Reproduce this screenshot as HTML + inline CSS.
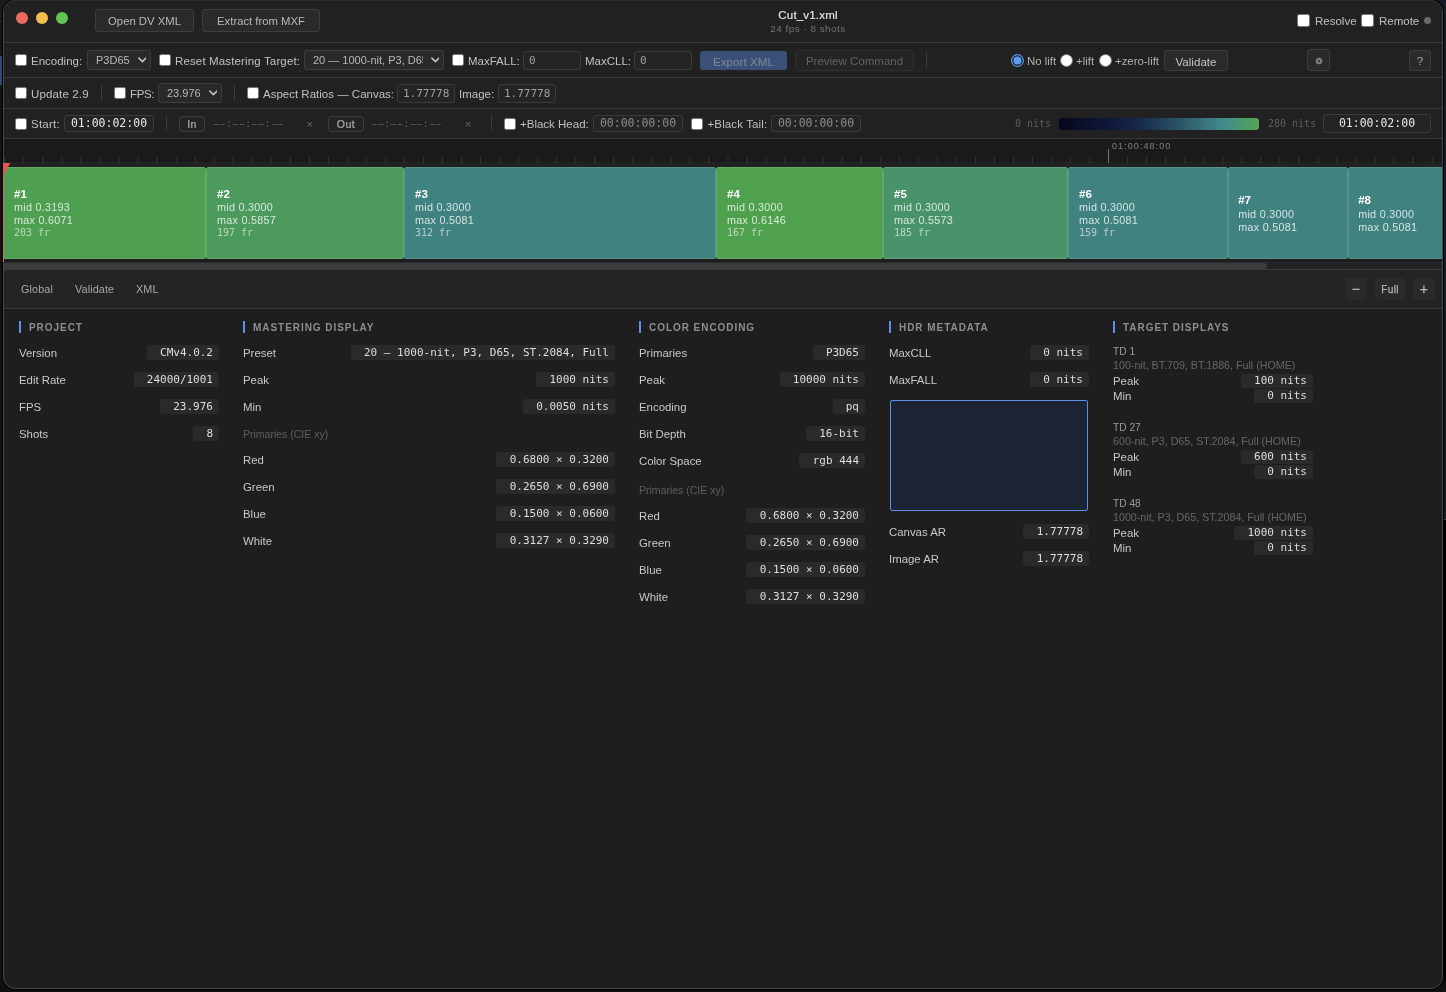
<!DOCTYPE html>
<html lang="en">
<head>
<meta charset="utf-8">
<title>Cut_v1.xml</title>
<style>
*{box-sizing:border-box;margin:0;padding:0}
html,body{width:1446px;height:992px;overflow:hidden;background:#141414}
body{position:relative;font-family:"Liberation Sans",Arial,sans-serif;color:#d0d0d0;font-size:11px}
.mono{font-family:"DejaVu Sans Mono","Liberation Mono",monospace}
.abs{position:absolute}
/* backdrop behind the window */
#bg-right{position:absolute;left:1436px;top:0;width:10px;height:992px;background:linear-gradient(#161a24 0,#161a24 519px,#3a3f4a 519px,#3a3f4a 520px,#000 520px)}
#bg-bottom{position:absolute;left:0;top:980px;width:1446px;height:12px;background:#101010}
#bg-left{position:absolute;left:0;top:0;width:10px;height:992px;background:linear-gradient(#1b1b1b 0,#1b1b1b 21px,#2c2c2c 21px,#2c2c2c 22px,#141414 22px,#141414 51px,#2a2a2a 51px,#2a2a2a 52px,#141414 52px,#141414 56px,#2c4d6e 56px,#2c4d6e 85px,#121212 85px)}
/* window */
#ph{position:absolute;left:0;top:0;will-change:transform}
#win{will-change:transform;position:absolute;left:3px;top:0;width:1440px;height:989px;background:#1e1e1e;border:1px solid #464646;border-radius:12px;overflow:hidden;box-shadow:0 0 0 1px #000}
#win>*{position:absolute}
.hline{left:0;width:1440px;height:1px;background:#3a3a3a}
.bar{left:0;width:1440px;background:#212121}
.btn{border:1px solid #3d3d3d;border-radius:3px;background:#2a2a2a;color:#c4c4c4;text-align:center;white-space:nowrap}
.lbl{white-space:nowrap;color:#c0c0c0;font-size:11.5px;line-height:14px}
.cb{width:12px;height:12px;background:#fff;border:1px solid #767676;border-radius:2.2px}
.rb{width:13px;height:13px;background:#fff;border:1px solid #767676;border-radius:50%}
.inp{border:1px solid #3b3b3b;border-radius:3px;background:#242424;color:#9a9a9a;white-space:nowrap}
.sel{border:1px solid #3d3d3d;border-radius:3px;background:#292929;color:#b8b8b8;white-space:nowrap;overflow:hidden}
.vsep{width:1px;background:#3d3d3d}
#c{position:absolute;left:-4px;top:-1px;width:1446px;height:992px}
#c .hline{left:4px;position:absolute}
#c .bar{left:4px;position:absolute}
.tl{width:12px;height:12px;border-radius:50%}
.tb{font-size:11.3px;line-height:21px;padding-top:1px;color:#b8b8b8}
#title{left:708px;width:200px;top:8px;text-align:center;font-size:11.5px;color:#e6e6e6;line-height:14px;letter-spacing:.18px;-webkit-text-stroke:.18px #e0e0e0}
#subtitle{left:708px;width:200px;top:23px;text-align:center;font-size:9.9px;letter-spacing:.5px;color:#747474;line-height:12px}
.st{position:absolute;top:0;line-height:18px;font-size:11px;white-space:nowrap;display:block}
.chev{position:absolute;right:3.6px;top:6.3px;width:8.8px;height:5.9px}
.ti{font-size:11px;line-height:17px;padding-left:5px;color:#a0a0a0}
.tc{font-size:11.5px;line-height:15px;text-align:center;color:#8a8a8a}
.rb.on{background:#5b9cf5;border:1.5px solid #5b9cf5;box-shadow:inset 0 0 0 1.5px #262626}
.lbl.sm{font-size:11.4px;margin-top:-.5px;color:#b2b2b2}
.io{font-size:10.5px;font-weight:normal;letter-spacing:.45px;-webkit-text-stroke:.22px #adadad;line-height:15px;color:#adadad;background:#242424}
.hy{display:inline-block;transform:scaleX(1.8)}
.dash{font-size:10.6px;line-height:14px;color:#5c5c5c}
.xx{font-size:11px;line-height:14px;color:#6a6a6a}
.nits{font-size:10px;line-height:14px;color:#5e5e5e}
#rlabel{left:1112px;top:141px;font-size:9px;line-height:11px;color:#808080;letter-spacing:1.08px;white-space:nowrap}
.clip{top:167px;height:92px;border-radius:2.5px;border:1px solid rgba(255,255,255,.13);display:flex;align-items:center;overflow:hidden}
.ci{padding-left:10px;white-space:nowrap}
.c3 .cm{position:relative;top:1.4px}
.ci.c3{padding-left:9.2px}
.cn{font-weight:bold;font-size:11.5px;line-height:13px;color:#fff}
.cm{font-size:10.8px;letter-spacing:.27px;line-height:12.8px;color:rgba(255,255,255,.78)}
.cf{font-size:10px;line-height:11px;color:rgba(255,255,255,.6)}
.tab{top:283px;font-size:10.8px;letter-spacing:.12px;line-height:13px;color:#a8a8a8}
.zb{top:278px;height:21.5px;border-radius:4px;background:#2a2a2a;color:#b4b4b4;text-align:center;line-height:23.4px;font-size:14px;-webkit-text-stroke:.25px #b4b4b4}
.sbar{top:321px;width:2px;height:12px;background:#5b8fe8}
.stitle{top:322px;font-size:10px;line-height:12px;font-weight:bold;letter-spacing:.95px;color:#8e8e8e;white-space:nowrap}
.rl{font-size:11.4px;line-height:14px;color:#c8c8c8;white-space:nowrap}
.pill{height:14.5px;border-radius:3px;background:#2a2a2a;color:#dedede;font-size:11px;line-height:14px;padding:1px 6px 0 13.2px;white-space:pre}
.subh{font-size:10.5px;line-height:13px;color:#5e5e5e;white-space:nowrap}
.tdn{font-size:10.2px;line-height:12px;color:#9a9a9a;white-space:nowrap}
.tdd{font-size:10.7px;line-height:12px;color:#666;white-space:nowrap}
</style>
</head>
<body>
<div id="bg-left"></div><div id="bg-right"></div><div id="bg-bottom"></div>
<div id="win">
<div id="c">
<!-- title bar -->
<div class="bar" style="top:0;height:42px"></div>
<div class="abs tl" style="left:16px;top:12px;background:#ec6a5e"></div>
<div class="abs tl" style="left:36px;top:12px;background:#f4bf4f"></div>
<div class="abs tl" style="left:56px;top:12px;background:#61c554"></div>
<div class="abs btn tb" style="left:95px;top:9px;width:99px;height:23px">Open DV XML</div>
<div class="abs btn tb" style="left:202px;top:9px;width:118px;height:23px">Extract from MXF</div>
<div class="abs" id="title">Cut_v1.xml</div>
<div class="abs" id="subtitle">24 fps · 8 shots</div>
<div class="abs cb" style="left:1297px;top:14px;width:13px;height:13px"></div>
<div class="abs lbl" style="left:1315px;top:14px">Resolve</div>
<div class="abs cb" style="left:1361px;top:14px;width:13px;height:13px"></div>
<div class="abs lbl" style="left:1379px;top:14px">Remote</div>
<div class="abs" style="left:1424px;top:17px;width:7px;height:7px;border-radius:50%;background:#6a6a6a"></div>
<div class="abs hline" style="top:42px"></div>
<div class="bar" style="top:43px;height:34px"></div>
<div class="abs cb" style="left:15px;top:54px"></div>
<div class="abs lbl" style="left:31px;top:54px">Encoding:</div>
<div class="abs sel" style="left:87px;top:50px;width:64px;height:20px"><span class="st" style="left:8px">P3D65</span><svg class="chev" viewBox="0 0 10 6"><path d="M1 1l4 4 4-4" fill="none" stroke="#bababa" stroke-width="1.9" stroke-linecap="round" stroke-linejoin="round"/></svg></div>
<div class="abs cb" style="left:159px;top:54px"></div>
<div class="abs lbl" style="left:175px;top:54px;letter-spacing:.14px">Reset Mastering Target:</div>
<div class="abs sel" style="left:304px;top:50px;width:140px;height:20px"><span class="st" style="left:8px;width:110px;overflow:hidden">20 — 1000-nit, P3, D65, ST.2084</span><svg class="chev" viewBox="0 0 10 6"><path d="M1 1l4 4 4-4" fill="none" stroke="#bababa" stroke-width="1.9" stroke-linecap="round" stroke-linejoin="round"/></svg></div>
<div class="abs cb" style="left:452px;top:54px"></div>
<div class="abs lbl" style="left:468px;top:54px">MaxFALL:</div>
<div class="abs inp mono ti" style="left:523px;top:51px;width:58px;height:19px">0</div>
<div class="abs lbl" style="left:585px;top:54px">MaxCLL:</div>
<div class="abs inp mono ti" style="left:634px;top:51px;width:58px;height:19px">0</div>
<div class="abs" style="left:700px;top:51px;width:87px;height:19px;border-radius:3px;background:#3a5077;color:#7e8796;font-size:11.7px;line-height:21px;text-align:center">Export XML</div>
<div class="abs btn" style="left:795px;top:50px;width:119px;height:21px;background:#242424;border-color:#303030;color:#626262;font-size:11.5px;line-height:20px">Preview Command</div>
<div class="abs vsep" style="left:926px;top:52px;height:16px"></div>
<div class="abs rb on" style="left:1011px;top:54px"></div>
<div class="abs lbl sm" style="left:1027px;top:54px">No lift</div>
<div class="abs rb" style="left:1060px;top:54px"></div>
<div class="abs lbl sm" style="left:1076px;top:54px">+lift</div>
<div class="abs rb" style="left:1099px;top:54px"></div>
<div class="abs lbl sm" style="left:1115px;top:54px">+zero-lift</div>
<div class="abs btn" style="left:1164px;top:50px;width:64px;height:21px;font-size:11.6px;line-height:21px">Validate</div>
<div class="abs btn" style="left:1307px;top:49px;width:23px;height:22px;font-size:9px;line-height:22px"></div><svg class="abs" style="left:1314.5px;top:56.7px" width="8.1" height="8.1" viewBox="0 0 9 9"><circle cx="4.5" cy="4.5" r="2.35" fill="none" stroke="#9c9c9c" stroke-width="1.25"/><path d="M7.20 4.50L8.20 4.50M6.41 6.41L7.12 7.12M4.50 7.20L4.50 8.20M2.59 6.41L1.88 7.12M1.80 4.50L0.80 4.50M2.59 2.59L1.88 1.88M4.50 1.80L4.50 0.80M6.41 2.59L7.12 1.88" stroke="#9c9c9c" stroke-width="1.5" fill="none"/><circle cx="4.5" cy="4.5" r=".55" fill="#9c9c9c"/></svg>
<div class="abs btn" style="left:1409px;top:50px;width:22px;height:21px;font-size:11.5px;line-height:21px;color:#a8a8a8">?</div>
<div class="abs hline" style="top:77px"></div>
<div class="bar" style="top:78px;height:30px"></div>
<div class="abs cb" style="left:15px;top:87px"></div>
<div class="abs lbl" style="left:31px;top:87px;letter-spacing:.15px">Update 2.9</div>
<div class="abs vsep" style="left:101px;top:85px;height:16px"></div>
<div class="abs cb" style="left:114px;top:87px"></div>
<div class="abs lbl" style="left:130px;top:87px;letter-spacing:-.35px">FPS:</div>
<div class="abs sel" style="left:158px;top:83px;width:64px;height:20px"><span class="st" style="left:8px">23.976</span><svg class="chev" viewBox="0 0 10 6"><path d="M1 1l4 4 4-4" fill="none" stroke="#bababa" stroke-width="1.9" stroke-linecap="round" stroke-linejoin="round"/></svg></div>
<div class="abs vsep" style="left:234px;top:85px;height:16px"></div>
<div class="abs cb" style="left:247px;top:87px"></div>
<div class="abs lbl" style="left:263px;top:87px">Aspect Ratios — Canvas:</div>
<div class="abs inp mono ti" style="left:397px;top:84px;width:58px;height:19px">1.77778</div>
<div class="abs lbl" style="left:459px;top:87px">Image:</div>
<div class="abs inp mono ti" style="left:498px;top:84px;width:58px;height:19px">1.77778</div>
<div class="abs hline" style="top:108px"></div>
<div class="bar" style="top:109px;height:29px"></div>
<div class="abs cb" style="left:15px;top:118px"></div>
<div class="abs lbl" style="left:31px;top:117px;letter-spacing:.25px">Start:</div>
<div class="abs inp mono tc" style="left:64px;top:115px;width:90px;height:17px;color:#e8e8e8">01:00:02:00</div>
<div class="abs vsep" style="left:166px;top:116px;height:15px"></div>
<div class="abs btn io" style="left:179px;top:116px;width:26px;height:16px">In</div>
<div class="abs mono dash" style="left:213px;top:116px"><span class="hy">-</span><span class="hy">-</span>:<span class="hy">-</span><span class="hy">-</span>:<span class="hy">-</span><span class="hy">-</span>:<span class="hy">-</span><span class="hy">-</span></div>
<div class="abs xx" style="left:306.5px;top:117px">×</div>
<div class="abs btn io" style="left:328px;top:116px;width:36px;height:16px">Out</div>
<div class="abs mono dash" style="left:371.3px;top:116px"><span class="hy">-</span><span class="hy">-</span>:<span class="hy">-</span><span class="hy">-</span>:<span class="hy">-</span><span class="hy">-</span>:<span class="hy">-</span><span class="hy">-</span></div>
<div class="abs xx" style="left:465px;top:117px">×</div>
<div class="abs vsep" style="left:491px;top:116px;height:15px"></div>
<div class="abs cb" style="left:504px;top:118px"></div>
<div class="abs lbl" style="left:520px;top:117px">+Black Head:</div>
<div class="abs inp mono tc" style="left:593px;top:115px;width:90px;height:17px">00:00:00:00</div>
<div class="abs cb" style="left:691px;top:118px"></div>
<div class="abs lbl" style="left:707.5px;top:117px;letter-spacing:.12px">+Black Tail:</div>
<div class="abs inp mono tc" style="left:771px;top:115px;width:90px;height:17px">00:00:00:00</div>
<div class="abs mono nits" style="left:1015px;top:117px">0 nits</div>
<div class="abs" style="left:1059px;top:118px;width:200px;height:12px;border-radius:3px;background:linear-gradient(90deg,#07071c 0%,#0e1432 20%,#15244a 38%,#1f3d58 50%,#2f606e 65%,#428a8b 82%,#4a9a6e 92%,#55a553 100%)"></div>
<div class="abs mono nits" style="left:1268px;top:117px">280 nits</div>
<div class="abs inp mono tc" style="left:1323px;top:114px;width:108px;height:19px;color:#e8e8e8;line-height:17px">01:00:02:00</div>
<div class="abs hline" style="top:138px"></div>
<div class="abs" style="left:4px;top:139px;width:1440px;height:124px;background:#1a1a1a"></div>
<div class="abs" style="left:4px;top:162px;width:1440px;height:101px;background:#1d1d1d"></div><div class="abs" style="left:4px;top:162px;width:1440px;height:5px;background:#212121"></div><div class="abs" style="left:4px;top:161.5px;width:1440px;height:1px;background:#242424"></div>
<svg class="abs" style="left:0;top:0" width="1446" height="170" viewBox="0 0 1446 170"><rect x="4.35" y="157" width="1" height="6" fill="#363636"/><rect x="23.38" y="157" width="1" height="6" fill="#363636"/><rect x="42.41" y="157" width="1" height="6" fill="#363636"/><rect x="61.44" y="157" width="1" height="6" fill="#363636"/><rect x="80.47" y="157" width="1" height="6" fill="#363636"/><rect x="99.50" y="157" width="1" height="6" fill="#363636"/><rect x="118.53" y="157" width="1" height="6" fill="#363636"/><rect x="137.56" y="157" width="1" height="6" fill="#363636"/><rect x="156.59" y="157" width="1" height="6" fill="#363636"/><rect x="175.62" y="157" width="1" height="6" fill="#363636"/><rect x="194.65" y="157" width="1" height="6" fill="#363636"/><rect x="213.68" y="157" width="1" height="6" fill="#363636"/><rect x="232.71" y="157" width="1" height="6" fill="#363636"/><rect x="251.74" y="157" width="1" height="6" fill="#363636"/><rect x="270.77" y="157" width="1" height="6" fill="#363636"/><rect x="289.80" y="157" width="1" height="6" fill="#363636"/><rect x="308.83" y="157" width="1" height="6" fill="#363636"/><rect x="327.86" y="157" width="1" height="6" fill="#363636"/><rect x="346.89" y="157" width="1" height="6" fill="#363636"/><rect x="365.92" y="157" width="1" height="6" fill="#363636"/><rect x="384.95" y="157" width="1" height="6" fill="#363636"/><rect x="403.98" y="157" width="1" height="6" fill="#363636"/><rect x="423.01" y="157" width="1" height="6" fill="#363636"/><rect x="442.04" y="157" width="1" height="6" fill="#363636"/><rect x="461.07" y="157" width="1" height="6" fill="#363636"/><rect x="480.10" y="157" width="1" height="6" fill="#363636"/><rect x="499.13" y="157" width="1" height="6" fill="#363636"/><rect x="518.16" y="157" width="1" height="6" fill="#363636"/><rect x="537.19" y="157" width="1" height="6" fill="#363636"/><rect x="556.22" y="157" width="1" height="6" fill="#363636"/><rect x="575.25" y="157" width="1" height="6" fill="#363636"/><rect x="594.28" y="157" width="1" height="6" fill="#363636"/><rect x="613.31" y="157" width="1" height="6" fill="#363636"/><rect x="632.34" y="157" width="1" height="6" fill="#363636"/><rect x="651.37" y="157" width="1" height="6" fill="#363636"/><rect x="670.40" y="157" width="1" height="6" fill="#363636"/><rect x="689.43" y="157" width="1" height="6" fill="#363636"/><rect x="708.46" y="157" width="1" height="6" fill="#363636"/><rect x="727.49" y="157" width="1" height="6" fill="#363636"/><rect x="746.52" y="157" width="1" height="6" fill="#363636"/><rect x="765.55" y="157" width="1" height="6" fill="#363636"/><rect x="784.58" y="157" width="1" height="6" fill="#363636"/><rect x="803.61" y="157" width="1" height="6" fill="#363636"/><rect x="822.64" y="157" width="1" height="6" fill="#363636"/><rect x="841.67" y="157" width="1" height="6" fill="#363636"/><rect x="860.70" y="157" width="1" height="6" fill="#363636"/><rect x="879.73" y="157" width="1" height="6" fill="#363636"/><rect x="898.76" y="157" width="1" height="6" fill="#363636"/><rect x="917.79" y="157" width="1" height="6" fill="#363636"/><rect x="936.82" y="157" width="1" height="6" fill="#363636"/><rect x="955.85" y="157" width="1" height="6" fill="#363636"/><rect x="974.88" y="157" width="1" height="6" fill="#363636"/><rect x="993.91" y="157" width="1" height="6" fill="#363636"/><rect x="1012.94" y="157" width="1" height="6" fill="#363636"/><rect x="1031.97" y="157" width="1" height="6" fill="#363636"/><rect x="1051.00" y="157" width="1" height="6" fill="#363636"/><rect x="1070.03" y="157" width="1" height="6" fill="#363636"/><rect x="1089.06" y="157" width="1" height="6" fill="#363636"/><rect x="1127.12" y="157" width="1" height="6" fill="#363636"/><rect x="1146.15" y="157" width="1" height="6" fill="#363636"/><rect x="1165.18" y="157" width="1" height="6" fill="#363636"/><rect x="1184.21" y="157" width="1" height="6" fill="#363636"/><rect x="1203.24" y="157" width="1" height="6" fill="#363636"/><rect x="1222.27" y="157" width="1" height="6" fill="#363636"/><rect x="1241.30" y="157" width="1" height="6" fill="#363636"/><rect x="1260.33" y="157" width="1" height="6" fill="#363636"/><rect x="1279.36" y="157" width="1" height="6" fill="#363636"/><rect x="1298.39" y="157" width="1" height="6" fill="#363636"/><rect x="1317.42" y="157" width="1" height="6" fill="#363636"/><rect x="1336.45" y="157" width="1" height="6" fill="#363636"/><rect x="1355.48" y="157" width="1" height="6" fill="#363636"/><rect x="1374.51" y="157" width="1" height="6" fill="#363636"/><rect x="1393.54" y="157" width="1" height="6" fill="#363636"/><rect x="1412.57" y="157" width="1" height="6" fill="#363636"/><rect x="1431.60" y="157" width="1" height="6" fill="#363636"/><rect x="1108" y="149" width="1" height="14" fill="#747474"/></svg>
<div class="abs" id="rlabel">01:00:48:00</div>
<div class="abs clip" style="left:3px;width:203px;background:#4f9f52"><div class="ci"><div class="cn">#1</div><div class="cm">mid 0.3193</div><div class="cm">max 0.6071</div><div class="cf mono">203 fr</div></div></div>
<div class="abs clip" style="left:206px;width:198px;background:#4c9a5e"><div class="ci"><div class="cn">#2</div><div class="cm">mid 0.3000</div><div class="cm">max 0.5857</div><div class="cf mono">197 fr</div></div></div>
<div class="abs clip" style="left:404px;width:312px;background:#3f827f"><div class="ci"><div class="cn">#3</div><div class="cm">mid 0.3000</div><div class="cm">max 0.5081</div><div class="cf mono">312 fr</div></div></div>
<div class="abs clip" style="left:716px;width:167px;background:#50a14e"><div class="ci"><div class="cn">#4</div><div class="cm">mid 0.3000</div><div class="cm">max 0.6146</div><div class="cf mono">167 fr</div></div></div>
<div class="abs clip" style="left:883px;width:185px;background:#49936b"><div class="ci"><div class="cn">#5</div><div class="cm">mid 0.3000</div><div class="cm">max 0.5573</div><div class="cf mono">185 fr</div></div></div>
<div class="abs clip" style="left:1068px;width:160px;background:#3f827f"><div class="ci"><div class="cn">#6</div><div class="cm">mid 0.3000</div><div class="cm">max 0.5081</div><div class="cf mono">159 fr</div></div></div>
<div class="abs clip" style="left:1228px;width:120px;background:#3f827f"><div class="ci c3"><div class="cn">#7</div><div class="cm">mid 0.3000</div><div class="cm">max 0.5081</div></div></div>
<div class="abs clip" style="left:1348px;width:95px;background:#3f827f"><div class="ci c3"><div class="cn">#8</div><div class="cm">mid 0.3000</div><div class="cm">max 0.5081</div></div></div>
<div class="abs" style="left:4px;top:262px;width:1440px;height:7px;background:#222;border-top:1px solid #2a2a2a"></div>
<div class="abs" style="left:4px;top:262.7px;width:1263px;height:6.4px;background:#3b3b3b;border-radius:0 3.2px 3.2px 0"></div>
<div class="abs hline" style="top:269px"></div><div class="bar" style="top:270px;height:38px;background:#242424"></div>
<div class="abs tab" style="left:21px">Global</div>
<div class="abs tab" style="left:75px">Validate</div>
<div class="abs tab" style="left:136px">XML</div>
<div class="abs zb" style="left:1345.2px;width:21.5px">−</div>
<div class="abs zb" style="left:1375px;width:30px;font-size:10.1px;letter-spacing:.3px;-webkit-text-stroke:.25px #b4b4b4;line-height:23.4px">Full</div>
<div class="abs zb" style="left:1413.2px;width:21.5px">+</div>
<div class="abs hline" style="top:308px"></div>
<div class="abs sbar" style="left:19px"></div><div class="abs stitle" style="left:29px">PROJECT</div>
<div class="abs rl" style="left:19px;top:345.5px">Version</div><div class="abs pill mono" style="right:1227px;top:345.0px">CMv4.0.2</div>
<div class="abs rl" style="left:19px;top:372.5px">Edit Rate</div><div class="abs pill mono" style="right:1227px;top:372.0px">24000/1001</div>
<div class="abs rl" style="left:19px;top:399.5px">FPS</div><div class="abs pill mono" style="right:1227px;top:399.0px">23.976</div>
<div class="abs rl" style="left:19px;top:426.5px">Shots</div><div class="abs pill mono" style="right:1227px;top:426.0px">8</div>
<div class="abs sbar" style="left:243px"></div><div class="abs stitle" style="left:253px">MASTERING DISPLAY</div>
<div class="abs rl" style="left:243px;top:345.5px">Preset</div><div class="abs pill mono" style="right:831px;top:345.0px">20 — 1000-nit, P3, D65, ST.2084, Full</div>
<div class="abs rl" style="left:243px;top:372.5px">Peak</div><div class="abs pill mono" style="right:831px;top:372.0px">1000 nits</div>
<div class="abs rl" style="left:243px;top:399.5px">Min</div><div class="abs pill mono" style="right:831px;top:399.0px">0.0050 nits</div>
<div class="abs subh" style="left:243px;top:427.5px">Primaries (CIE xy)</div>
<div class="abs rl" style="left:243px;top:452.5px">Red</div><div class="abs pill mono" style="right:831px;top:452.0px">0.6800 × 0.3200</div>
<div class="abs rl" style="left:243px;top:479.5px">Green</div><div class="abs pill mono" style="right:831px;top:479.0px">0.2650 × 0.6900</div>
<div class="abs rl" style="left:243px;top:506.5px">Blue</div><div class="abs pill mono" style="right:831px;top:506.0px">0.1500 × 0.0600</div>
<div class="abs rl" style="left:243px;top:533.5px">White</div><div class="abs pill mono" style="right:831px;top:533.0px">0.3127 × 0.3290</div>
<div class="abs sbar" style="left:639px"></div><div class="abs stitle" style="left:649px">COLOR ENCODING</div>
<div class="abs rl" style="left:639px;top:345.5px">Primaries</div><div class="abs pill mono" style="right:581px;top:345.0px">P3D65</div>
<div class="abs rl" style="left:639px;top:372.5px">Peak</div><div class="abs pill mono" style="right:581px;top:372.0px">10000 nits</div>
<div class="abs rl" style="left:639px;top:399.5px">Encoding</div><div class="abs pill mono" style="right:581px;top:399.0px">pq</div>
<div class="abs rl" style="left:639px;top:426.5px">Bit Depth</div><div class="abs pill mono" style="right:581px;top:426.0px">16-bit</div>
<div class="abs rl" style="left:639px;top:453.5px">Color Space</div><div class="abs pill mono" style="right:581px;top:453.0px">rgb 444</div>
<div class="abs subh" style="left:639px;top:483.5px">Primaries (CIE xy)</div>
<div class="abs rl" style="left:639px;top:508.5px">Red</div><div class="abs pill mono" style="right:581px;top:508.0px">0.6800 × 0.3200</div>
<div class="abs rl" style="left:639px;top:535.5px">Green</div><div class="abs pill mono" style="right:581px;top:535.0px">0.2650 × 0.6900</div>
<div class="abs rl" style="left:639px;top:562.5px">Blue</div><div class="abs pill mono" style="right:581px;top:562.0px">0.1500 × 0.0600</div>
<div class="abs rl" style="left:639px;top:589.5px">White</div><div class="abs pill mono" style="right:581px;top:589.0px">0.3127 × 0.3290</div>
<div class="abs sbar" style="left:889px"></div><div class="abs stitle" style="left:899px">HDR METADATA</div>
<div class="abs rl" style="left:889px;top:345.5px">MaxCLL</div><div class="abs pill mono" style="right:357px;top:345.0px">0 nits</div>
<div class="abs rl" style="left:889px;top:372.5px">MaxFALL</div><div class="abs pill mono" style="right:357px;top:372.0px">0 nits</div>
<div class="abs" style="left:889.5px;top:399.5px;width:198.5px;height:111.5px;border:1px solid #5b8fe8;border-radius:2px;background:#1c2333"></div>
<div class="abs rl" style="left:889px;top:524.5px">Canvas AR</div><div class="abs pill mono" style="right:357px;top:524.0px">1.77778</div>
<div class="abs rl" style="left:889px;top:551.5px">Image AR</div><div class="abs pill mono" style="right:357px;top:551.0px">1.77778</div>
<div class="abs sbar" style="left:1113px"></div><div class="abs stitle" style="left:1123px">TARGET DISPLAYS</div>
<div class="abs tdn" style="left:1113px;top:346.3px">TD 1</div>
<div class="abs tdd" style="left:1113px;top:358.7px">100-nit, BT.709, BT.1886, Full (HOME)</div>
<div class="abs rl" style="left:1113px;top:374px">Peak</div><div class="abs pill mono" style="right:133px;top:373.5px;height:14px;padding-top:0">100 nits</div>
<div class="abs rl" style="left:1113px;top:389px">Min</div><div class="abs pill mono" style="right:133px;top:389px;height:14px;padding-top:0">0 nits</div>
<div class="abs tdn" style="left:1113px;top:422.3px">TD 27</div>
<div class="abs tdd" style="left:1113px;top:434.7px">600-nit, P3, D65, ST.2084, Full (HOME)</div>
<div class="abs rl" style="left:1113px;top:450px">Peak</div><div class="abs pill mono" style="right:133px;top:449.5px;height:14px;padding-top:0">600 nits</div>
<div class="abs rl" style="left:1113px;top:465px">Min</div><div class="abs pill mono" style="right:133px;top:465px;height:14px;padding-top:0">0 nits</div>
<div class="abs tdn" style="left:1113px;top:498.3px">TD 48</div>
<div class="abs tdd" style="left:1113px;top:510.7px">1000-nit, P3, D65, ST.2084, Full (HOME)</div>
<div class="abs rl" style="left:1113px;top:526px">Peak</div><div class="abs pill mono" style="right:133px;top:525.5px;height:14px;padding-top:0">1000 nits</div>
<div class="abs rl" style="left:1113px;top:541px">Min</div><div class="abs pill mono" style="right:133px;top:541px;height:14px;padding-top:0">0 nits</div>
</div>
</div>
<div class="abs" style="left:13px;top:0;width:1420px;height:1px;background:#2b2b2b;will-change:transform"></div>
<div id="ph"><div class="abs" style="left:3px;top:163px;width:1.3px;height:99px;background:#f0605a"></div><svg class="abs" style="left:3px;top:163px" width="8" height="13" viewBox="0 0 8 13"><path d="M0 0H7.3L0 13Z" fill="#ec544c"/></svg></div>
</body>
</html>
